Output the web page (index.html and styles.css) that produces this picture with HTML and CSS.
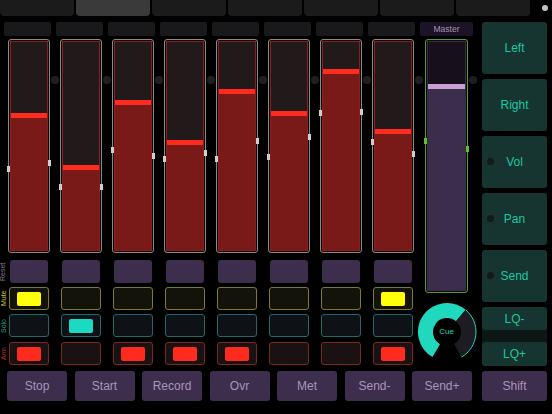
FILE: index.html
```html
<!DOCTYPE html>
<html lang="en">
<head>
    <meta charset="UTF-8">
    <meta name="viewport" content="width=device-width, initial-scale=1.0">
    <title>Mixer</title>
    <link rel="stylesheet" href="styles.css">
</head>
<body>
    <div class="tabs">
        <div class="tab"></div>
        <div class="tab active"></div>
        <div class="tab"></div>
        <div class="tab"></div>
        <div class="tab"></div>
        <div class="tab"></div>
        <div class="tab"></div>
        <div class="tab-dot"></div>
    </div>

    <div class="main">
        <div class="strips">
            <div class="strip">
                <div class="ch-label"></div>
                <div class="fader">
                    <div class="track"><div class="fill" style="height: 66%"></div></div>
                    <span class="meter left" style="top: 126px"></span>
                    <span class="meter right" style="top: 120px"></span>
                </div>
                <div class="reset"><span class="side-label reset-label">Reset</span></div>
                <div class="pad mute"><span class="side-label mute-label">Mute</span><span class="lit"></span></div>
                <div class="pad solo"><span class="side-label solo-label">Solo</span></div>
                <div class="pad arm"><span class="side-label arm-label">Arm</span><span class="lit"></span></div>
            </div>
            <div class="strip">
                <div class="ch-label"></div>
                <div class="fader">
                    <div class="track"><div class="fill" style="height: 41%"></div></div>
                    <span class="meter left" style="top: 144px"></span>
                    <span class="meter right" style="top: 144px"></span>
                </div>
                <div class="reset"></div>
                <div class="pad mute"></div>
                <div class="pad solo"><span class="lit"></span></div>
                <div class="pad arm"></div>
            </div>
            <div class="strip">
                <div class="ch-label"></div>
                <div class="fader">
                    <div class="track"><div class="fill" style="height: 72%"></div></div>
                    <span class="meter left" style="top: 107px"></span>
                    <span class="meter right" style="top: 113px"></span>
                </div>
                <div class="reset"></div>
                <div class="pad mute"></div>
                <div class="pad solo"></div>
                <div class="pad arm"><span class="lit"></span></div>
            </div>
            <div class="strip">
                <div class="ch-label"></div>
                <div class="fader">
                    <div class="track"><div class="fill" style="height: 53%"></div></div>
                    <span class="meter left" style="top: 116px"></span>
                    <span class="meter right" style="top: 110px"></span>
                </div>
                <div class="reset"></div>
                <div class="pad mute"></div>
                <div class="pad solo"></div>
                <div class="pad arm"><span class="lit"></span></div>
            </div>
            <div class="strip">
                <div class="ch-label"></div>
                <div class="fader">
                    <div class="track"><div class="fill" style="height: 77.6%"></div></div>
                    <span class="meter left" style="top: 116px"></span>
                    <span class="meter right" style="top: 98px"></span>
                </div>
                <div class="reset"></div>
                <div class="pad mute"></div>
                <div class="pad solo"></div>
                <div class="pad arm"><span class="lit"></span></div>
            </div>
            <div class="strip">
                <div class="ch-label"></div>
                <div class="fader">
                    <div class="track"><div class="fill" style="height: 66.7%"></div></div>
                    <span class="meter left" style="top: 114px"></span>
                    <span class="meter right" style="top: 94px"></span>
                </div>
                <div class="reset"></div>
                <div class="pad mute"></div>
                <div class="pad solo"></div>
                <div class="pad arm"></div>
            </div>
            <div class="strip">
                <div class="ch-label"></div>
                <div class="fader">
                    <div class="track"><div class="fill" style="height: 87.1%"></div></div>
                    <span class="meter left" style="top: 70px"></span>
                    <span class="meter right" style="top: 69px"></span>
                </div>
                <div class="reset"></div>
                <div class="pad mute"></div>
                <div class="pad solo"></div>
                <div class="pad arm"></div>
            </div>
            <div class="strip">
                <div class="ch-label"></div>
                <div class="fader">
                    <div class="track"><div class="fill" style="height: 58.1%"></div></div>
                    <span class="meter left" style="top: 99px"></span>
                    <span class="meter right" style="top: 111px"></span>
                </div>
                <div class="reset"></div>
                <div class="pad mute"><span class="lit"></span></div>
                <div class="pad solo"></div>
                <div class="pad arm"><span class="lit"></span></div>
            </div>
        </div>

        <div class="master">
            <div class="master-label">Master</div>
            <div class="fader master-fader">
                <div class="track"><div class="fill" style="height: 83.2%"></div></div>
                <span class="meter left" style="top: 98px"></span>
                <span class="meter right" style="top: 106px"></span>
            </div>
            <div class="knob">
                <svg width="60" height="60" viewBox="0 0 60 60">
                    <path d="M19.25 48.62 A21.5 21.5 0 1 1 43.82 13.53" fill="none" stroke="#1fd8bd" stroke-width="15"/>
                    <path d="M43.82 13.53 A21.5 21.5 0 0 1 40.75 48.62" fill="none" stroke="#1e1c22" stroke-width="15"/>
                    <path d="M48.64 7.79 A29 29 0 0 1 44.5 55.11" fill="none" stroke="#1fd8bd" stroke-width="1"/>
                </svg>
                <span class="knob-label">Cue</span>
            </div>
        </div>

        <div class="side">
            <div class="side-btn">Left</div>
            <div class="side-btn">Right</div>
            <div class="side-btn dotted">Vol</div>
            <div class="side-btn dotted">Pan</div>
            <div class="side-btn dotted">Send</div>
            <div class="lq">
                <div class="side-btn">LQ-</div>
                <div class="side-btn">LQ+</div>
            </div>
        </div>
    </div>

    <div class="transport">
        <div class="t-btn">Stop</div>
        <div class="t-btn">Start</div>
        <div class="t-btn">Record</div>
        <div class="t-btn">Ovr</div>
        <div class="t-btn">Met</div>
        <div class="t-btn">Send-</div>
        <div class="t-btn">Send+</div>
        <div class="t-btn shift">Shift</div>
    </div>
</body>
</html>
```

FILE: styles.css
```css
body {
    margin: 0;
    width: 552px;
    height: 414px;
    overflow: hidden;
    background-color: #000000;
    font-family: 'Liberation Sans', Arial, sans-serif;
}

/* top tabs */
.tabs {
    display: flex;
    align-items: center;
    gap: 2px;
    height: 16px;
}
.tab {
    width: 74px;
    height: 16px;
    background-color: #1b1b1b;
    border-radius: 0 0 4px 4px;
}
.tab.active { background-color: #3a3a3a; }
.tab-dot {
    width: 6px;
    height: 6px;
    margin-left: 10px;
    border-radius: 50%;
    background-color: #c4c4c4;
}

.main {
    display: flex;
    height: 344px;
    padding: 6px 0 0 4px;
}
.strips {
    display: flex;
    gap: 5px;
}
.strip {
    width: 47px;
    display: flex;
    flex-direction: column;
}
.ch-label {
    height: 14px;
    background-color: #19191c;
    border-radius: 2px;
}

/* faders */
.fader {
    position: relative;
    box-sizing: border-box;
    width: 42px;
    height: 214px;
    margin: 3px 0 0 4px;
    padding: 1px;
    border: 1px solid #8c8888;
    border-radius: 3px;
    background-color: #0b0b0b;
}
.fader::after {
    content: '';
    position: absolute;
    right: -10px;
    top: 36px;
    width: 8px;
    height: 8px;
    border-radius: 50%;
    background-color: #1f1f1f;
}
.track {
    box-sizing: border-box;
    height: 100%;
    display: flex;
    flex-direction: column;
    justify-content: flex-end;
    border: 1px solid #8a1e1e;
    background-color: #221a1a;
}
.fill {
    box-sizing: border-box;
    background-color: #7a1a18;
    border-top: 5px solid #ff2b1f;
}
.meter {
    position: absolute;
    width: 3px;
    height: 6px;
    background-color: #d6cccc;
}
.meter.left { left: -2px; }
.meter.right { right: -2px; }

.master-fader {
    width: 43px;
    height: 254px;
    margin: 3px 0 0 5px;
    border-color: #5a9a2c;
}
.master-fader .track {
    border-color: #3a2c48;
    background-color: #180f1d;
}
.master-fader .fill {
    background-color: #3d2d4d;
    border-top-color: #c89fd0;
}
.master-fader .meter { background-color: #5cc232; }

/* button rows */
.reset {
    position: relative;
    width: 38px;
    height: 23px;
    margin: 7px 0 0 6px;
    background-color: #3d2e4d;
    border-radius: 3px;
}
.pad {
    position: relative;
    box-sizing: border-box;
    width: 40px;
    height: 23px;
    margin: 4px 0 0 5px;
    display: flex;
    align-items: center;
    justify-content: center;
    border-radius: 3px;
}
.pad.arm { margin-top: 5px; }
.lit {
    width: 24px;
    height: 14px;
    border-radius: 2px;
}
.mute { border: 1px solid #7d7b2b; background-color: #13130b; }
.mute .lit { background-color: #ffff0a; }
.solo { border: 1px solid #1d6a68; background-color: #0e1216; }
.solo .lit { background-color: #1cd9c2; }
.arm { border: 1px solid #7c2626; background-color: #1a1212; }
.arm .lit { background-color: #ff2b1f; }

.side-label {
    position: absolute;
    left: -10px;
    top: 0;
    height: 100%;
    writing-mode: vertical-rl;
    transform: rotate(180deg);
    text-align: center;
    font-size: 7px;
    line-height: 8px;
}
.reset-label { left: -11px; color: #857a90; }
.mute-label { color: #c7c234; }
.solo-label { color: #1fa08f; }
.arm-label { color: #b83030; }

/* master column */
.master {
    width: 53px;
    margin-left: 5px;
    display: flex;
    flex-direction: column;
    align-items: center;
}
.master-label {
    align-self: stretch;
    height: 14px;
    line-height: 14px;
    text-align: center;
    font-size: 8.5px;
    color: #a493b5;
    background-color: #1d1327;
    border-radius: 2px;
}
.master .fader { align-self: flex-start; }
.knob {
    position: relative;
    width: 60px;
    height: 60px;
    margin-top: 9px;
    flex-shrink: 0;
}
.knob svg { display: block; }
.knob-label {
    position: absolute;
    left: 0;
    right: 0;
    top: 25px;
    text-align: center;
    font-size: 8px;
    color: #1fd8bd;
}

/* right column */
.side {
    width: 65px;
    margin-left: 9px;
    display: flex;
    flex-direction: column;
    gap: 5px;
}
.side-btn {
    position: relative;
    height: 52px;
    display: flex;
    align-items: center;
    justify-content: center;
    background-color: #163430;
    color: #1cc7a3;
    font-size: 12px;
    border-radius: 3px;
}
.side-btn.dotted::before {
    content: '';
    position: absolute;
    left: 5px;
    top: 22px;
    width: 7px;
    height: 7px;
    border-radius: 50%;
    background-color: #141a19;
}
.lq {
    height: 59px;
    display: flex;
    flex-direction: column;
    justify-content: space-between;
    background-color: #0c1614;
    border-radius: 3px;
}
.lq .side-btn { height: 23px; }
.lq .side-btn:last-child { height: 24px; }

/* transport */
.transport {
    display: grid;
    grid-template-columns: repeat(7, 60px) 67.5px;
    column-gap: 7.5px;
    padding: 5px 0 0 7px;
}
.t-btn {
    height: 30px;
    display: flex;
    align-items: center;
    justify-content: center;
    background-color: #3d2e4d;
    color: #a995ba;
    font-size: 12px;
    border-radius: 3px;
}
.t-btn.shift {
    width: 65px;
    justify-self: end;
}
```
